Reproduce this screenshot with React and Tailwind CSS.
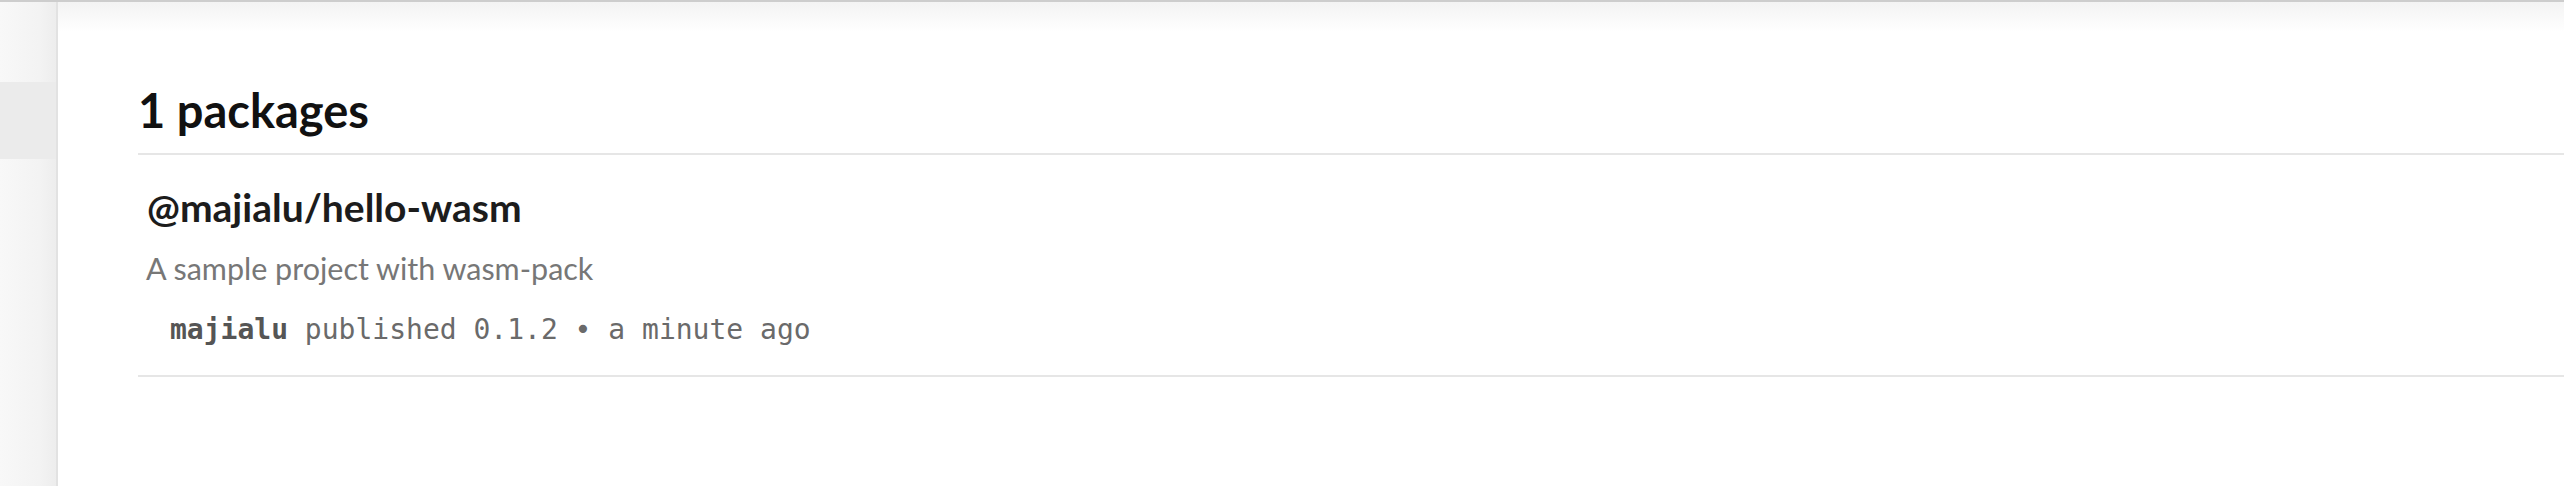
import React from 'react';

const sans = { fontFamily: '"Lato", "Noto Sans", sans-serif' };

function Sidebar() {
  return (
    <aside className="w-[58px] shrink-0 border-r-2 border-[#e2e2e2] bg-[linear-gradient(to_right,#f8f8f8,#f3f3f3_70%,#ededed)]">
      {/* active nav row */}
      <div className="mt-[80px] h-[77px] bg-[#ebebeb]" />
    </aside>
  );
}

function PackageRow({ name, description, author, version, when }) {
  return (
    <li className="border-b-2 border-[#e6e6e6] pb-[27px]">
      <h3 className="pl-[9px] pt-[27px] text-[39px] leading-[50px] font-bold text-[#1c1c1c]">{name}</h3>
      <p className="pl-[8px] mt-[16px] text-[30.5px] leading-[40px] text-[#777]">{description}</p>
      <div className="pl-[32px] mt-[24px] text-[28px] leading-[36px] text-[#6a6a6a] font-['DejaVu_Sans_Mono',monospace]">
        <span className="font-bold text-[#555]">{author}</span> published {version} • {when}
      </div>
    </li>
  );
}

export default function App() {
  return (
    <div className="w-full h-[486px] flex flex-col bg-white" style={sans}>
      {/* top edge */}
      <div className="h-[2px] bg-[#cdcdcd]" />
      <div className="flex flex-1">
        <Sidebar />
        <main className="flex-1 pl-[80px] bg-[linear-gradient(to_bottom,#f3f3f3,#ffffff_30px)]">
          <h2 className="pt-[80px] pb-[15px] text-[47px] leading-[56px] font-bold text-[#111] border-b-2 border-[#e6e6e6]">
            1 packages
          </h2>
          <ul>
            <PackageRow
              name="@majialu/hello-wasm"
              description="A sample project with wasm-pack"
              author="majialu"
              version="0.1.2"
              when="a minute ago"
            />
          </ul>
        </main>
      </div>
    </div>
  );
}
